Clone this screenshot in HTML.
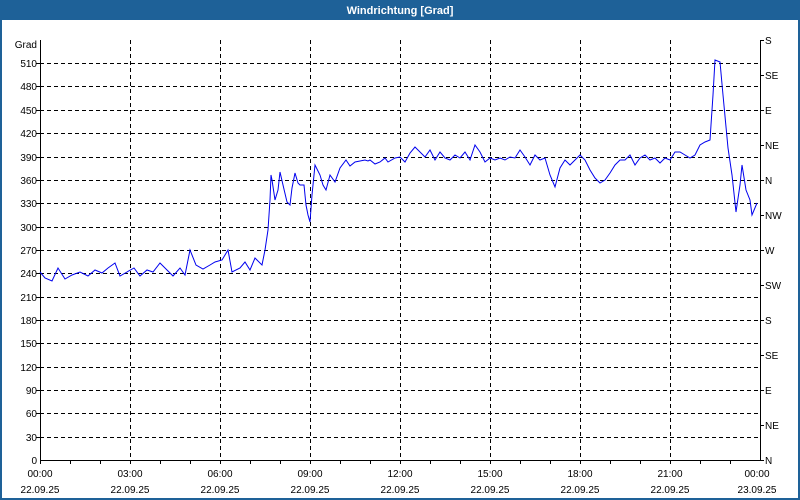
<!DOCTYPE html>
<html><head><meta charset="utf-8"><style>
html,body{margin:0;padding:0;width:800px;height:500px;overflow:hidden;background:#fff;font-family:"Liberation Sans",sans-serif}
</style></head><body>
<svg width="800" height="500" xmlns="http://www.w3.org/2000/svg" font-family="Liberation Sans, sans-serif" font-size="10">
<rect x="0" y="0" width="800" height="500" fill="#1e6198"/>
<rect x="2" y="20" width="796" height="478" fill="#fff"/>
<text x="400" y="14" text-anchor="middle" fill="#fff" font-weight="bold" font-size="11">Windrichtung [Grad]</text>
<g stroke="#000" stroke-dasharray="4,3" stroke-width="1">
<line x1="40" x2="760" y1="63.5" y2="63.5"/><line x1="40" x2="760" y1="86.5" y2="86.5"/><line x1="40" x2="760" y1="110.5" y2="110.5"/><line x1="40" x2="760" y1="133.5" y2="133.5"/><line x1="40" x2="760" y1="157.5" y2="157.5"/><line x1="40" x2="760" y1="180.5" y2="180.5"/><line x1="40" x2="760" y1="203.5" y2="203.5"/><line x1="40" x2="760" y1="227.5" y2="227.5"/><line x1="40" x2="760" y1="250.5" y2="250.5"/><line x1="40" x2="760" y1="273.5" y2="273.5"/><line x1="40" x2="760" y1="297.5" y2="297.5"/><line x1="40" x2="760" y1="320.5" y2="320.5"/><line x1="40" x2="760" y1="343.5" y2="343.5"/><line x1="40" x2="760" y1="367.5" y2="367.5"/><line x1="40" x2="760" y1="390.5" y2="390.5"/><line x1="40" x2="760" y1="413.5" y2="413.5"/><line x1="40" x2="760" y1="437.5" y2="437.5"/>
<line y1="40" y2="460" x1="130.5" x2="130.5"/><line y1="40" y2="460" x1="220.5" x2="220.5"/><line y1="40" y2="460" x1="310.5" x2="310.5"/><line y1="40" y2="460" x1="400.5" x2="400.5"/><line y1="40" y2="460" x1="490.5" x2="490.5"/><line y1="40" y2="460" x1="580.5" x2="580.5"/><line y1="40" y2="460" x1="670.5" x2="670.5"/>
</g>
<g stroke="#000" stroke-width="1" fill="none">
<path d="M40.5 40V460.5H760.5V40"/>
<path d="M70.5 460v4M100.5 460v4M130.5 460v4M160.5 460v4M190.5 460v4M220.5 460v4M250.5 460v4M280.5 460v4M310.5 460v4M340.5 460v4M370.5 460v4M400.5 460v4M430.5 460v4M460.5 460v4M490.5 460v4M520.5 460v4M550.5 460v4M580.5 460v4M610.5 460v4M640.5 460v4M670.5 460v4M700.5 460v4M730.5 460v4M40.5 460v4"/>
<path d="M760 40.5h4M760 75.5h4M760 110.5h4M760 145.5h4M760 180.5h4M760 215.5h4M760 250.5h4M760 285.5h4M760 320.5h4M760 355.5h4M760 390.5h4M760 425.5h4M760 460.5h4"/>
<path d="M36 63.5h4M36 86.5h4M36 110.5h4M36 133.5h4M36 157.5h4M36 180.5h4M36 203.5h4M36 227.5h4M36 250.5h4M36 273.5h4M36 297.5h4M36 320.5h4M36 343.5h4M36 367.5h4M36 390.5h4M36 413.5h4M36 437.5h4"/>
</g>
<g text-anchor="end">
<text x="37" y="48">Grad</text>
<text x="37" y="67">510</text><text x="37" y="90">480</text><text x="37" y="114">450</text><text x="37" y="137">420</text><text x="37" y="161">390</text><text x="37" y="184">360</text><text x="37" y="207">330</text><text x="37" y="231">300</text><text x="37" y="254">270</text><text x="37" y="277">240</text><text x="37" y="301">210</text><text x="37" y="324">180</text><text x="37" y="347">150</text><text x="37" y="371">120</text><text x="37" y="394">90</text><text x="37" y="417">60</text><text x="37" y="441">30</text><text x="37" y="464">0</text>
</g>
<g>
<text x="765" y="44">S</text><text x="765" y="79">SE</text><text x="765" y="114">E</text><text x="765" y="149">NE</text><text x="765" y="184">N</text><text x="765" y="219">NW</text><text x="765" y="254">W</text><text x="765" y="289">SW</text><text x="765" y="324">S</text><text x="765" y="359">SE</text><text x="765" y="394">E</text><text x="765" y="429">NE</text><text x="765" y="464">N</text>
</g>
<g text-anchor="middle">
<text x="40" y="477">00:00</text><text x="40" y="493">22.09.25</text>
<text x="130" y="477">03:00</text><text x="130" y="493">22.09.25</text>
<text x="220" y="477">06:00</text><text x="220" y="493">22.09.25</text>
<text x="310" y="477">09:00</text><text x="310" y="493">22.09.25</text>
<text x="400" y="477">12:00</text><text x="400" y="493">22.09.25</text>
<text x="490" y="477">15:00</text><text x="490" y="493">22.09.25</text>
<text x="580" y="477">18:00</text><text x="580" y="493">22.09.25</text>
<text x="670" y="477">21:00</text><text x="670" y="493">22.09.25</text>
<text x="757" y="477">00:00</text><text x="757" y="493">23.09.25</text>
</g>
<polyline fill="none" stroke="#0000ee" stroke-width="1" points="40,272 45,278 52,281 58,268 65,279 72,275 80,272 88,276 95,270 102,273 108,268 115,263 120,276 127,272 134,268 140,276 147,270 153,272 160,263 167,270 173,276 180,268 185,275 190,250 196,265 203,269 210,265 215,262 222,260 228,250 232,272 240,268 245,262 250,270 255,258 262,265 265,250 268,230 270,200 271,175 272,180 275,200 278,190 280,172 283,185 287,202 290,205 292,188 295,173 298,183 300,185 304,185 306,205 308,215 310,222 312,195 315,165 320,175 323,185 326,190 330,175 335,182 340,168 346,160 350,166 355,162 360,161 365,160 368,161 370,160 375,164 380,162 385,158 388,162 395,158 400,157 405,162 410,153 415,147 420,152 425,157 430,150 435,160 440,152 445,158 450,160 455,155 460,158 465,152 470,160 475,145 480,152 485,162 490,158 495,160 500,158 505,160 510,157 515,158 520,150 525,157 530,165 535,155 540,160 545,158 550,175 555,187 560,168 565,160 570,165 575,160 580,155 585,160 590,170 595,178 600,183 605,180 610,173 615,165 620,160 625,160 630,155 635,165 640,158 645,155 650,160 655,158 660,163 665,158 670,160 675,152 680,152 685,155 690,158 695,155 700,145 705,142 710,140 713,95 715,60 720,62 723,95 728,148 732,175 736,212 740,185 742,165 746,190 750,200 752,215 757,203"/>
</svg>
</body></html>
